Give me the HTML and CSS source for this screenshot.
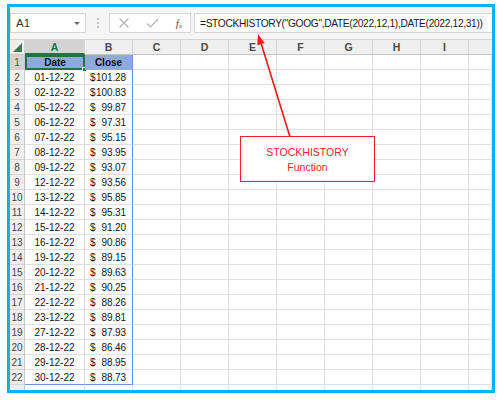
FILE: index.html
```html
<!DOCTYPE html>
<html>
<head>
<meta charset="utf-8">
<link rel="stylesheet" href="styles.css">
</head>
<body>
<div class="frame">
  <div class="toolbar">
    <div class="namebox"><span>A1</span><span class="drop"></span></div>
    <div class="dots"><i></i><i></i><i></i></div>
    <div class="fbtns">
      <svg width="12" height="12" viewBox="0 0 12 12"><path d="M1.5 1.5 L10.5 10.5 M10.5 1.5 L1.5 10.5" stroke="#b3b3b3" stroke-width="1.2" fill="none"/></svg>
      <svg width="13" height="12" viewBox="0 0 13 12"><path d="M1 6.5 L4.5 10 L12 2" stroke="#b3b3b3" stroke-width="1.2" fill="none"/></svg>
      <span class="fx">f<sub>x</sub></span>
    </div>
    <div class="fbar">=STOCKHISTORY("GOOG",DATE(2022,12,1),DATE(2022,12,31))</div>
  </div>
  <div class="sheet">
    <div class="row hdr">
      <div class="corner"><span class="tri"></span></div>
      <div class="ch sel">A</div><div class="ch">B</div><div class="ch">C</div><div class="ch">D</div><div class="ch">E</div><div class="ch">F</div><div class="ch">G</div><div class="ch">H</div><div class="ch">I</div><div class="ch last"></div>
    </div>
    <div class="row">
      <div class="rh sel">1</div>
      <div class="c ca th active">Date<span class="handle"></span></div><div class="c cb th">Close</div><div class="c"></div><div class="c"></div><div class="c"></div><div class="c"></div><div class="c"></div><div class="c"></div><div class="c"></div><div class="c"></div>
    </div>
    <div class="row"><div class="rh">2</div><div class="c ca">01-12-22</div><div class="c cb"><span>$</span><span>101.28</span></div><div class="c"></div><div class="c"></div><div class="c"></div><div class="c"></div><div class="c"></div><div class="c"></div><div class="c"></div><div class="c"></div></div>
    <div class="row"><div class="rh">3</div><div class="c ca">02-12-22</div><div class="c cb"><span>$</span><span>100.83</span></div><div class="c"></div><div class="c"></div><div class="c"></div><div class="c"></div><div class="c"></div><div class="c"></div><div class="c"></div><div class="c"></div></div>
    <div class="row"><div class="rh">4</div><div class="c ca">05-12-22</div><div class="c cb"><span>$</span><span>99.87</span></div><div class="c"></div><div class="c"></div><div class="c"></div><div class="c"></div><div class="c"></div><div class="c"></div><div class="c"></div><div class="c"></div></div>
    <div class="row"><div class="rh">5</div><div class="c ca">06-12-22</div><div class="c cb"><span>$</span><span>97.31</span></div><div class="c"></div><div class="c"></div><div class="c"></div><div class="c"></div><div class="c"></div><div class="c"></div><div class="c"></div><div class="c"></div></div>
    <div class="row"><div class="rh">6</div><div class="c ca">07-12-22</div><div class="c cb"><span>$</span><span>95.15</span></div><div class="c"></div><div class="c"></div><div class="c"></div><div class="c"></div><div class="c"></div><div class="c"></div><div class="c"></div><div class="c"></div></div>
    <div class="row"><div class="rh">7</div><div class="c ca">08-12-22</div><div class="c cb"><span>$</span><span>93.95</span></div><div class="c"></div><div class="c"></div><div class="c"></div><div class="c"></div><div class="c"></div><div class="c"></div><div class="c"></div><div class="c"></div></div>
    <div class="row"><div class="rh">8</div><div class="c ca">09-12-22</div><div class="c cb"><span>$</span><span>93.07</span></div><div class="c"></div><div class="c"></div><div class="c"></div><div class="c"></div><div class="c"></div><div class="c"></div><div class="c"></div><div class="c"></div></div>
    <div class="row"><div class="rh">9</div><div class="c ca">12-12-22</div><div class="c cb"><span>$</span><span>93.56</span></div><div class="c"></div><div class="c"></div><div class="c"></div><div class="c"></div><div class="c"></div><div class="c"></div><div class="c"></div><div class="c"></div></div>
    <div class="row"><div class="rh">10</div><div class="c ca">13-12-22</div><div class="c cb"><span>$</span><span>95.85</span></div><div class="c"></div><div class="c"></div><div class="c"></div><div class="c"></div><div class="c"></div><div class="c"></div><div class="c"></div><div class="c"></div></div>
    <div class="row"><div class="rh">11</div><div class="c ca">14-12-22</div><div class="c cb"><span>$</span><span>95.31</span></div><div class="c"></div><div class="c"></div><div class="c"></div><div class="c"></div><div class="c"></div><div class="c"></div><div class="c"></div><div class="c"></div></div>
    <div class="row"><div class="rh">12</div><div class="c ca">15-12-22</div><div class="c cb"><span>$</span><span>91.20</span></div><div class="c"></div><div class="c"></div><div class="c"></div><div class="c"></div><div class="c"></div><div class="c"></div><div class="c"></div><div class="c"></div></div>
    <div class="row"><div class="rh">13</div><div class="c ca">16-12-22</div><div class="c cb"><span>$</span><span>90.86</span></div><div class="c"></div><div class="c"></div><div class="c"></div><div class="c"></div><div class="c"></div><div class="c"></div><div class="c"></div><div class="c"></div></div>
    <div class="row"><div class="rh">14</div><div class="c ca">19-12-22</div><div class="c cb"><span>$</span><span>89.15</span></div><div class="c"></div><div class="c"></div><div class="c"></div><div class="c"></div><div class="c"></div><div class="c"></div><div class="c"></div><div class="c"></div></div>
    <div class="row"><div class="rh">15</div><div class="c ca">20-12-22</div><div class="c cb"><span>$</span><span>89.63</span></div><div class="c"></div><div class="c"></div><div class="c"></div><div class="c"></div><div class="c"></div><div class="c"></div><div class="c"></div><div class="c"></div></div>
    <div class="row"><div class="rh">16</div><div class="c ca">21-12-22</div><div class="c cb"><span>$</span><span>90.25</span></div><div class="c"></div><div class="c"></div><div class="c"></div><div class="c"></div><div class="c"></div><div class="c"></div><div class="c"></div><div class="c"></div></div>
    <div class="row"><div class="rh">17</div><div class="c ca">22-12-22</div><div class="c cb"><span>$</span><span>88.26</span></div><div class="c"></div><div class="c"></div><div class="c"></div><div class="c"></div><div class="c"></div><div class="c"></div><div class="c"></div><div class="c"></div></div>
    <div class="row"><div class="rh">18</div><div class="c ca">23-12-22</div><div class="c cb"><span>$</span><span>89.81</span></div><div class="c"></div><div class="c"></div><div class="c"></div><div class="c"></div><div class="c"></div><div class="c"></div><div class="c"></div><div class="c"></div></div>
    <div class="row"><div class="rh">19</div><div class="c ca">27-12-22</div><div class="c cb"><span>$</span><span>87.93</span></div><div class="c"></div><div class="c"></div><div class="c"></div><div class="c"></div><div class="c"></div><div class="c"></div><div class="c"></div><div class="c"></div></div>
    <div class="row"><div class="rh">20</div><div class="c ca">28-12-22</div><div class="c cb"><span>$</span><span>86.46</span></div><div class="c"></div><div class="c"></div><div class="c"></div><div class="c"></div><div class="c"></div><div class="c"></div><div class="c"></div><div class="c"></div></div>
    <div class="row"><div class="rh">21</div><div class="c ca">29-12-22</div><div class="c cb"><span>$</span><span>88.95</span></div><div class="c"></div><div class="c"></div><div class="c"></div><div class="c"></div><div class="c"></div><div class="c"></div><div class="c"></div><div class="c"></div></div>
    <div class="row lastdata"><div class="rh">22</div><div class="c ca">30-12-22</div><div class="c cb"><span>$</span><span>88.73</span></div><div class="c"></div><div class="c"></div><div class="c"></div><div class="c"></div><div class="c"></div><div class="c"></div><div class="c"></div><div class="c"></div></div>
    <div class="row"><div class="rh"></div><div class="c"></div><div class="c"></div><div class="c"></div><div class="c"></div><div class="c"></div><div class="c"></div><div class="c"></div><div class="c"></div><div class="c"></div><div class="c"></div><div class="c"></div></div>
  </div>
</div>
<svg class="arrow" width="501" height="400" viewBox="0 0 501 400">
  <line x1="290" y1="137" x2="261" y2="43" stroke="#f21818" stroke-width="1.6"/>
  <polygon points="258,34 264.6,43 257.3,45.2" fill="#f21818"/>
</svg>
<div class="callout"><span>STOCKHISTORY</span><span>Function</span></div>
</body>
</html>
```

FILE: styles.css
```css
* { box-sizing: border-box; }
html, body { margin: 0; padding: 0; background: #ffffff; }
body {
  font-family: "Liberation Sans", Arial, sans-serif;
  font-size: 10px;
  color: #222;
  position: relative;
  width: 501px;
  height: 400px;
  overflow: hidden;
}
.frame {
  margin: 4px 0 0 7px;
  width: 488px;
  height: 389px;
  border: 3px solid #0ab3ee;
  background: #ffffff;
  overflow: hidden;
}
.toolbar {
  height: 32px;
  display: flex;
  align-items: center;
  background: #f5f5f5;
}
.namebox {
  width: 76px;
  height: 20px;
  background: #fff;
  border: 1px solid #d6d6d6;
  display: flex;
  align-items: center;
  justify-content: space-between;
  padding: 0 5px 0 5px;
  font-size: 11.5px;
  color: #333;
}
.drop {
  width: 0; height: 0;
  border-left: 3px solid transparent;
  border-right: 3px solid transparent;
  border-top: 3px solid #666;
}
.dots {
  width: 23px;
  display: flex;
  flex-direction: column;
  align-items: center;
  gap: 2px;
}
.dots i {
  display: block;
  width: 2px; height: 2px;
  background: #c2c2c2;
}
.fbtns {
  width: 82px;
  height: 20px;
  background: #fff;
  border: 1px solid #d6d6d6;
  display: flex;
  align-items: center;
  justify-content: space-between;
  padding: 0 8px 0 8px;
}
.fx {
  font-family: "Liberation Serif", "Times New Roman", serif;
  font-style: italic;
  font-size: 11px;
  color: #555;
}
.fx sub { font-size: 7px; vertical-align: -1px; }
.fbar {
  margin-left: 3px;
  flex: 1;
  height: 20px;
  background: #fff;
  border: 1px solid #d6d6d6;
  border-right: none;
  display: flex;
  align-items: center;
  padding-left: 5px;
  font-size: 10.2px;
  letter-spacing: -0.32px;
  color: #1a1a1a;
  white-space: nowrap;
  overflow: hidden;
}
.sheet { background: #fff; }
.row {
  display: grid;
  grid-template-columns: 15px 60px repeat(8, 48px) 1fr;
  height: 15px;
}
.row.hdr { height: 16px; }
.corner, .ch {
  background: #efefef;
  border-right: 1px solid #d4d4d4;
  border-bottom: 1px solid #c6c6c6;
  border-top: 1px solid #d4d4d4;
}
.corner { position: relative; }
.tri {
  position: absolute;
  right: 2px; bottom: 2px;
  width: 0; height: 0;
  border-left: 9px solid transparent;
  border-bottom: 9px solid #3d7a4c;
}
.ch {
  display: flex;
  align-items: center;
  justify-content: center;
  font-size: 10.5px;
  font-weight: bold;
  color: #4a4a4a;
}
.ch.sel { background: #d3d3d3; color: #217346; border-bottom: 2px solid #217346; }
.ch.last { border-right: none; }
.rh {
  background: #efefef;
  border-right: 1px solid #c6c6c6;
  border-bottom: 1px solid #d4d4d4;
  display: flex;
  align-items: center;
  justify-content: center;
  font-size: 10px;
  color: #444;
}
.rh.sel { background: #d3d3d3; color: #217346; }
.c {
  border-right: 1px solid #e1e1e1;
  border-bottom: 1px solid #e1e1e1;
  display: flex;
  align-items: center;
  color: #151515;
}
.ca { justify-content: center; border-right-color: #d8ddd8; }
.cb {
  justify-content: space-between;
  padding: 0 6px 0 5px;
  border-right: 1px solid #6f93d6;
  letter-spacing: -0.1px;
}
.th {
  background: #8eaadb;
  font-weight: bold;
  color: #111;
  justify-content: center;
  padding: 0;
  position: relative;
  border-bottom-color: #8eaadb;
  letter-spacing: 0;
}
.active {
  border: 2px solid #217346;
}
.handle {
  position: absolute;
  right: -4px; bottom: -4px;
  width: 5px; height: 5px;
  background: #217346;
  border: 1px solid #fff;
}
.lastdata .ca, .lastdata .cb { border-bottom: 1px solid #6f93d6; }
.arrow {
  position: absolute;
  left: 0; top: 0;
  pointer-events: none;
}
.callout {
  position: absolute;
  left: 240px; top: 136px;
  width: 135px; height: 46px;
  background: #fff;
  border: 1px solid #e8202a;
  display: flex;
  flex-direction: column;
  align-items: center;
  justify-content: center;
  gap: 3px;
  color: #f2262f;
  font-size: 10.5px;
  line-height: 12px;
}
```
